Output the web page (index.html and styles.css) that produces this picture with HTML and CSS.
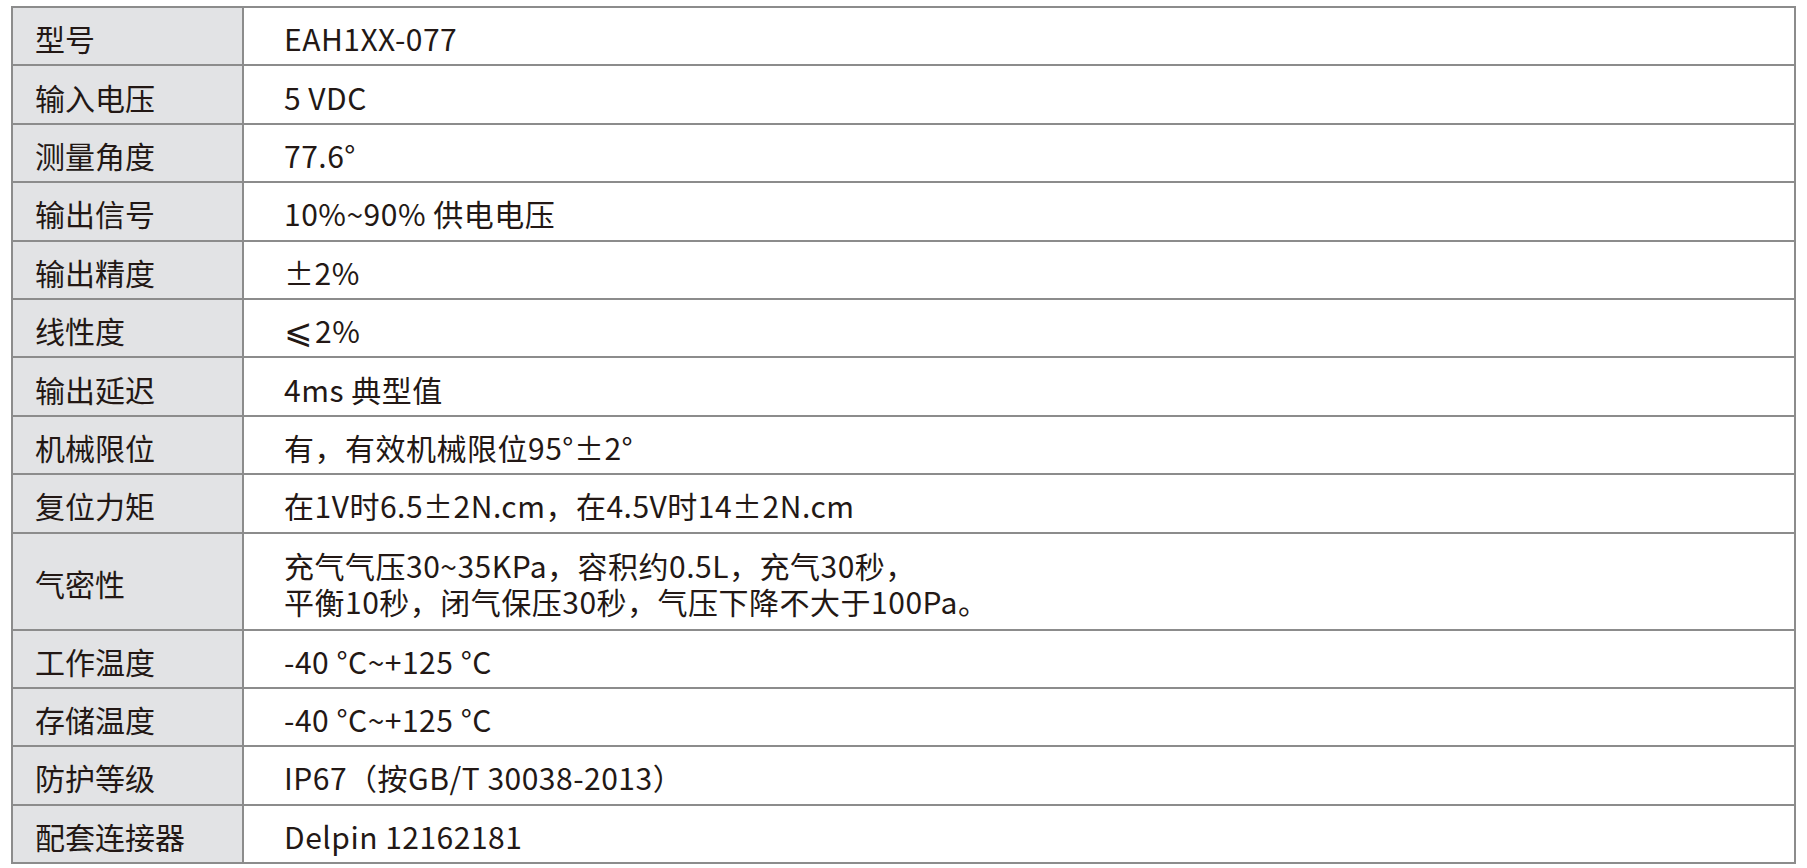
FILE: index.html
```html
<!DOCTYPE html>
<html lang="zh-CN">
<head>
<meta charset="utf-8">
<title>参数表</title>
<link rel="stylesheet" href="styles.css">
</head>
<body>
<table class="spec">
<tbody>
<tr><th>型号</th><td>EAH1XX-077</td></tr>
<tr><th>输入电压</th><td>5 VDC</td></tr>
<tr><th>测量角度</th><td>77.6°</td></tr>
<tr><th>输出信号</th><td>10%~90% 供电电压</td></tr>
<tr><th>输出精度</th><td>±2%</td></tr>
<tr><th>线性度</th><td><span class="sym">⩽</span>2%</td></tr>
<tr><th>输出延迟</th><td>4ms 典型值</td></tr>
<tr><th>机械限位</th><td>有，有效机械限位95°±2°</td></tr>
<tr><th>复位力矩</th><td>在1V时6.5±2N.cm，在4.5V时14±2N.cm</td></tr>
<tr class="tall"><th>气密性</th><td>充气气压30~35KPa，容积约0.5L，充气30秒，<br>平衡10秒，闭气保压30秒，气压下降不大于100Pa。</td></tr>
<tr><th>工作温度</th><td>-40 °C~+125 °C</td></tr>
<tr><th>存储温度</th><td>-40 °C~+125 °C</td></tr>
<tr><th>防护等级</th><td>IP67（按GB/T 30038-2013）</td></tr>
<tr><th>配套连接器</th><td>Delpin 12162181</td></tr>
</tbody>
</table>
</body>
</html>
```

FILE: styles.css
```css
html, body {
  margin: 0;
  padding: 0;
  background: #ffffff;
}

body {
  padding: 6px 11px 0 11px;
  font-family: "Noto Sans CJK SC", "Noto Sans", sans-serif;
  color: #231815;
}

.spec {
  width: 1785px;
  border-collapse: collapse;
  border: 2px solid #8c8c8c;
  font-size: 30px;
  line-height: 36px;
}

.spec tr {
  height: 58.4px;
}

.spec tr.tall {
  height: 97px;
}

.spec th,
.spec td {
  border: 2px solid #8c8c8c;
  padding: 4px 0 0 0;
  text-align: left;
  vertical-align: middle;
  font-weight: 400;
  white-space: nowrap;
}

.spec th {
  width: 207px;
  padding-left: 22px;
  background: #e2e3e5;
}

.spec td {
  padding-left: 40px;
  letter-spacing: 0.5px;
  background: #ffffff;
}

.sym {
  font-family: "DejaVu Sans", sans-serif;
  font-size: 34px;
  line-height: 36px;
  margin-right: 2px;
}
```
